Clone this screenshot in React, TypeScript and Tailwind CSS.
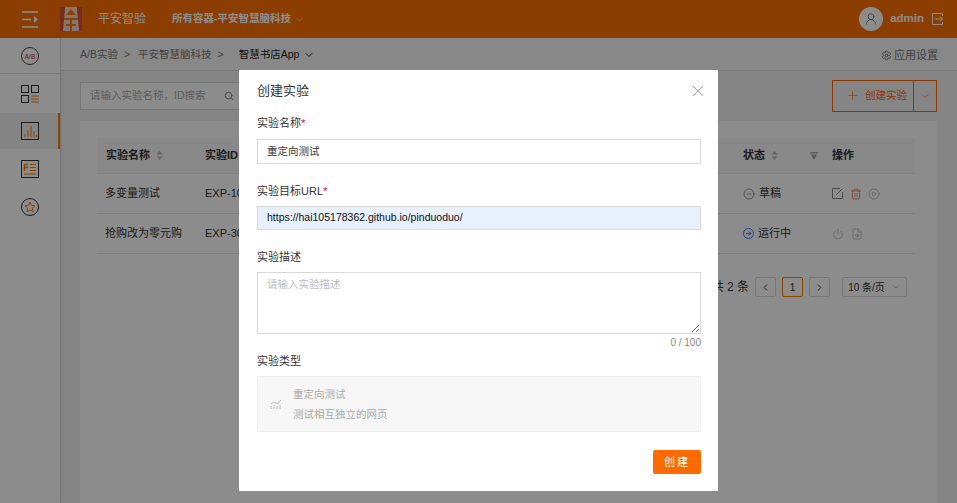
import React from "react";
import { ChevronDown, ChevronLeft, ChevronRight, CircleMinus, CirclePlay, Plus, Power, Search, Settings, Trash2, UserRound, X, FileSearch } from "lucide-react";

const font = { fontFamily: '"Liberation Sans","Noto Sans CJK SC",sans-serif' };

function SortIcon() {
  return (
    <svg width="7" height="11" viewBox="0 0 7 11" className="ml-[6px] shrink-0">
      <path d="M3.5 1 6.5 4.500H.5z" fill="#b5b5b5" />
      <path d="M3.5 10 .5 6.500h6z" fill="#b5b5b5" />
    </svg>
  );
}

function Logo() {
  return (
    <svg width="22" height="24" viewBox="0 0 22 24">
      <rect width="22" height="24" fill="#f3d9cb" />
      <path d="M0 0h5v2L3 24H0zM22 0h-5v2l2 22h3z" fill="#d9503f" />
      <path d="M11 2 6 8h10z" fill="#ff7a00" />
      <path d="M4 11h14v2h-6v4h4v2h-4v5h-2v-5H6v-2h4v-4H4z" fill="#ff7a00" />
    </svg>
  );
}

function SideIcon({ kind }: { kind: string }) {
  if (kind === "ab")
    return (
      <svg width="18" height="18" viewBox="0 0 18 18">
        <circle cx="9" cy="9" r="8.500" fill="none" stroke="#4a4a4a" />
        <text x="9" y="11.500" textAnchor="middle" fontSize="6.500" fill="#d02a20" fontFamily="Liberation Sans">A/B</text>
      </svg>
    );
  if (kind === "grid")
    return (
      <svg width="18" height="18" viewBox="0 0 18 18" fill="none">
        <rect x=".5" y=".5" width="7" height="7" stroke="#333" />
        <rect x="10.500" y=".5" width="7" height="7" stroke="#333" />
        <rect x=".5" y="10.500" width="7" height="7" stroke="#333" />
        <path d="M10 11h8M10 14h8M10 17h8" stroke="#ff7a00" />
      </svg>
    );
  if (kind === "chart")
    return (
      <svg width="18" height="18" viewBox="0 0 18 18" fill="none">
        <rect x=".5" y=".5" width="17" height="17" stroke="#333" />
        <path d="M4 15v-3M7 15V8M10 15V4M13 15V9M15.500 15v-2" stroke="#ff7a00" />
      </svg>
    );
  if (kind === "list")
    return (
      <svg width="18" height="18" viewBox="0 0 18 18" fill="none">
        <rect x=".5" y=".5" width="17" height="17" stroke="#333" />
        <path d="M3.500 4v7M3.500 4.500H7M3.500 7.500H7" stroke="#ff7a00" strokeWidth="1.400" />
        <path d="M9 4.500h6M9 7.500h6M9 10.500h6M3 14h12" stroke="#ff7a00" />
      </svg>
    );
  return (
    <svg width="18" height="18" viewBox="0 0 18 18" fill="none">
      <circle cx="9" cy="9" r="8.500" stroke="#333" />
      <path d="m9 4 1.500 3.300 3.500.4-2.600 2.400.7 3.500L9 11.900l-3.100 1.700.7-3.500L4 7.700l3.500-.4z" stroke="#ff7a00" />
    </svg>
  );
}

function Row({ name, id, status, actions }: { name: string; id: string; status: React.ReactNode; actions: React.ReactNode }) {
  return (
    <div className="flex h-10 items-center border-b border-[#e8e8e8] text-[11px] text-[#333]">
      <div className="w-[108px] pl-[8px]">{name}</div>
      <div className="w-[538px]">{id}</div>
      <div className="w-[89px]">{status}</div>
      <div className="flex items-center text-[#888]">{actions}</div>
    </div>
  );
}

export default function App() {
  return (
    <div className="relative flex h-[503px] w-[957px] flex-col overflow-hidden bg-[#f2f2f2]" style={font}>
      <header className="flex h-[38px] shrink-0 items-center bg-[#ff7000] text-white">
        <svg width="17" height="17" viewBox="0 0 17 17" fill="none" className="ml-[22px]">
          <path d="M0 1h16M0 8.500h9M0 16h16" stroke="#fff" strokeWidth="1.300" />
          <path d="M12 5l4 3.500-4 3.500z" fill="#fff" />
        </svg>
        <div className="ml-[21px]"><Logo /></div>
        <span className="ml-[16px] text-[12px]">平安智验</span>
        <span className="ml-[26px] text-[10.5px] font-bold">所有容器-平安智慧脑科技</span>
        <ChevronDown size={11} className="ml-[3px]" strokeWidth={1.200} />
        <div className="ml-auto flex items-center pr-[14px]">
          <span className="flex h-6 w-6 items-center justify-center rounded-full bg-white text-[#777]"><UserRound size={14} strokeWidth={1.500} /></span>
          <span className="ml-[7px] text-[11.500px] font-bold">admin</span>
          <svg width="12" height="12" viewBox="0 0 12 12" fill="none" stroke="#fff" className="ml-[7px]">
            <path d="M11.500 3V.5H1.500v11h10V9M4.500 6h7M9 3.500 11.500 6 9 8.500" />
          </svg>
        </div>
      </header>

      <div className="flex min-h-0 flex-1">
        <aside className="flex w-[61px] shrink-0 flex-col border-r border-[#d8d8d8] bg-white shadow">
          <div className="flex h-[36px] items-center justify-center border-b border-[#ddd]"><SideIcon kind="ab" /></div>
          <div className="flex h-[39px] items-center justify-center"><SideIcon kind="grid" /></div>
          <div className="relative flex h-[36px] items-center justify-center bg-[#f0f0f0]">
            <SideIcon kind="chart" />
            <span className="absolute right-0 top-0 h-full w-[2px] bg-[#ff7a00]" />
          </div>
          <div className="flex h-[40px] items-center justify-center"><SideIcon kind="list" /></div>
          <div className="flex h-[36px] items-center justify-center"><SideIcon kind="star" /></div>
        </aside>

        <main className="flex min-w-0 flex-1 flex-col">
          <div className="flex h-[33px] shrink-0 items-center border-b border-[#ddd] bg-[#f7f7f7] pl-[19px] pr-[19px] pt-[2px] text-[10.500px] text-[#777]">
            <span>A/B实验</span>
            <span className="ml-[6px]">&gt;</span>
            <span className="ml-[8px]">平安智慧脑科技</span>
            <span className="ml-[6px]">&gt;</span>
            <span className="ml-[15px] text-[#222]">智慧书店App</span>
            <ChevronDown size={12} className="ml-[4px] text-[#222]" />
            <span className="ml-auto flex items-center gap-[2px] text-[11px] text-[#777]"><Settings size={11} />应用设置</span>
          </div>

          <div className="flex min-h-0 flex-1 flex-col pl-[19px] pr-[20px]">
            <div className="flex h-[50px] shrink-0 items-center justify-between pb-[1px]">
              <div className="flex h-7 w-[170px] items-center border border-[#d9d9d9] bg-white pl-[9px] text-[10.500px] text-[#aaa]">
                请输入实验名称，ID搜索
                <Search size={10} className="ml-[18px] text-[#777]" />
              </div>
              <div className="flex h-8 w-[105px] items-center border border-[#ff6a00] text-[10.500px] text-[#ff6a00]">
                <div className="flex h-full flex-1 items-center justify-center gap-[6px] border-r border-[#ff6a00] pl-[7px]"><Plus size={13} strokeWidth={1.200} />创建实验</div>
                <div className="flex w-[22px] items-center justify-center"><ChevronDown size={12} strokeWidth={1.300} /></div>
              </div>
            </div>

            <div className="min-h-0 flex-1 bg-white pl-[17px] pr-[22px] pt-[17px]">
              <div className="flex h-[36px] items-center border-b border-[#e8e8e8] bg-[#f7f7f7] text-[11px] font-bold text-[#333]">
                <div className="flex w-[108px] items-center pl-[9px]">实验名称<SortIcon /></div>
                <div className="w-[538px]">实验ID</div>
                <div className="flex w-[67px] items-center">状态<SortIcon /></div>
                <svg width="8" height="7" viewBox="0 0 8 7" className="mr-[14px]"><path d="M0 0h8v1.500H0zM1 2.500h6L4.800 7H3.200z" fill="#aaa" /></svg>
                <div>操作</div>
              </div>
              <Row
                name="多变量测试"
                id="EXP-100"
                status={<span className="flex items-center gap-[4px]"><CircleMinus size={12} strokeWidth={1} />草稿</span>}
                actions={
                  <>
                    <svg width="11" height="11" viewBox="0 0 11 11" fill="none" stroke="#888"><path d="M8 .5H.5v10h10V4M4.500 6.500 10 1" /></svg>
                    <Trash2 size={12} className="ml-[7px] text-[#e0443c]" strokeWidth={1.200} />
                    <CirclePlay size={12} className="ml-[6px]" strokeWidth={1} />
                  </>
                }
              />
              <Row
                name="抢购改为零元购"
                id="EXP-300"
                status={<span className="flex items-center gap-[4px]"><svg width="11" height="11" viewBox="0 0 11 11" fill="none"><circle cx="5.500" cy="5.500" r="5" stroke="#3b7bff" /><path d="M3 5.500h5M6 3.500l2 2-2 2" stroke="#3b7bff" /></svg>运行中</span>}
                actions={<><Power size={12} strokeWidth={1} /><FileSearch size={12} className="ml-[7px]" strokeWidth={1} /></>}
              />
              <div className="mt-[23px] flex h-[20px] items-center justify-end pr-[8px] text-[12px] text-[#333]">
                <span>共 2 条</span>
                <span className="ml-[6px] flex h-[20px] w-[21px] items-center justify-center rounded-[2px] border border-[#d9d9d9]"><ChevronLeft size={11} /></span>
                <span className="ml-[6px] flex h-[20px] w-[21px] items-center justify-center rounded-[2px] border border-[#ff7a00] text-[10px]">1</span>
                <span className="ml-[6px] flex h-[20px] w-[21px] items-center justify-center rounded-[2px] border border-[#d9d9d9]"><ChevronRight size={11} /></span>
                <span className="ml-[12px] flex h-[20px] w-[65px] items-center justify-center gap-[6px] rounded-[2px] border border-[#d9d9d9] text-[10px]">10 条/页<ChevronDown size={10} className="text-[#aaa]" /></span>
              </div>
            </div>
          </div>
        </main>
      </div>

      <div className="absolute inset-0 bg-black opacity-45" />

      <div className="absolute left-[239px] top-[70px] flex h-[421px] w-[479px] flex-col bg-white pl-[18px] pr-[17px] text-[#333]">
        <div className="flex h-[41px] shrink-0 items-center justify-between pt-[1px]">
          <span className="text-[13px]">创建实验</span>
          <X size={18} strokeWidth={0.800} className="-mr-[6px] text-[#666]" />
        </div>
        <div className="mt-[3px] h-[18px] text-[11px] leading-[18px]">实验名称<span className="text-[#f00]">*</span></div>
        <div className="mt-[7px] flex h-[25px] items-center border border-[#d9d9d9] pl-[9px] text-[10.500px]">重定向测试</div>
        <div className="mt-[18px] h-[18px] text-[11px] leading-[18px]">实验目标URL<span className="text-[#f00]">*</span></div>
        <div className="mt-[6px] flex h-[24px] items-center border border-[#d9d9d9] bg-[#e8f0fe] pl-[9px] text-[10.500px] text-[#111]">https://hai105178362.github.io/pinduoduo/</div>
        <div className="mt-[18px] h-[18px] text-[11px] leading-[18px]">实验描述</div>
        <div className="relative mt-[6px] h-[62px] border border-[#d9d9d9] pl-[9px] pt-[4px] text-[10.500px] text-[#bbb]">
          请输入实验描述
          <svg width="8" height="8" viewBox="0 0 8 8" className="absolute bottom-[1px] right-[1px]"><path d="M1 8 8 1M5 8l3-3" stroke="#666" /></svg>
        </div>
        <div className="mt-[2px] h-[14px] text-right text-[10px] leading-[14px] text-[#888]">0 / 100</div>
        <div className="mt-[2px] h-[18px] text-[11px] leading-[18px]">实验类型</div>
        <div className="mt-[6px] flex h-[56px] items-center border border-[#f0f0f0] bg-[#f6f6f6] pl-[12px] text-[10.500px] text-[#aaa]">
          <svg width="12" height="12" viewBox="0 0 12 12" fill="none" stroke="#aaa" strokeWidth=".8"><path d="M1 11V8M4 11V7M7 11V8M10 11V7M1 6l3-2 3 2 4-4" /></svg>
          <div className="ml-[11px]">
            <div className="leading-[18px]">重定向测试</div>
            <div className="mt-[2px] leading-[18px]">测试相互独立的网页</div>
          </div>
        </div>
        <div className="mt-[18px] flex justify-end">
          <button className="h-6 w-12 rounded-[2px] bg-[#ff6a00] text-[11px] tracking-[2px] text-white">创建</button>
        </div>
      </div>
    </div>
  );
}
